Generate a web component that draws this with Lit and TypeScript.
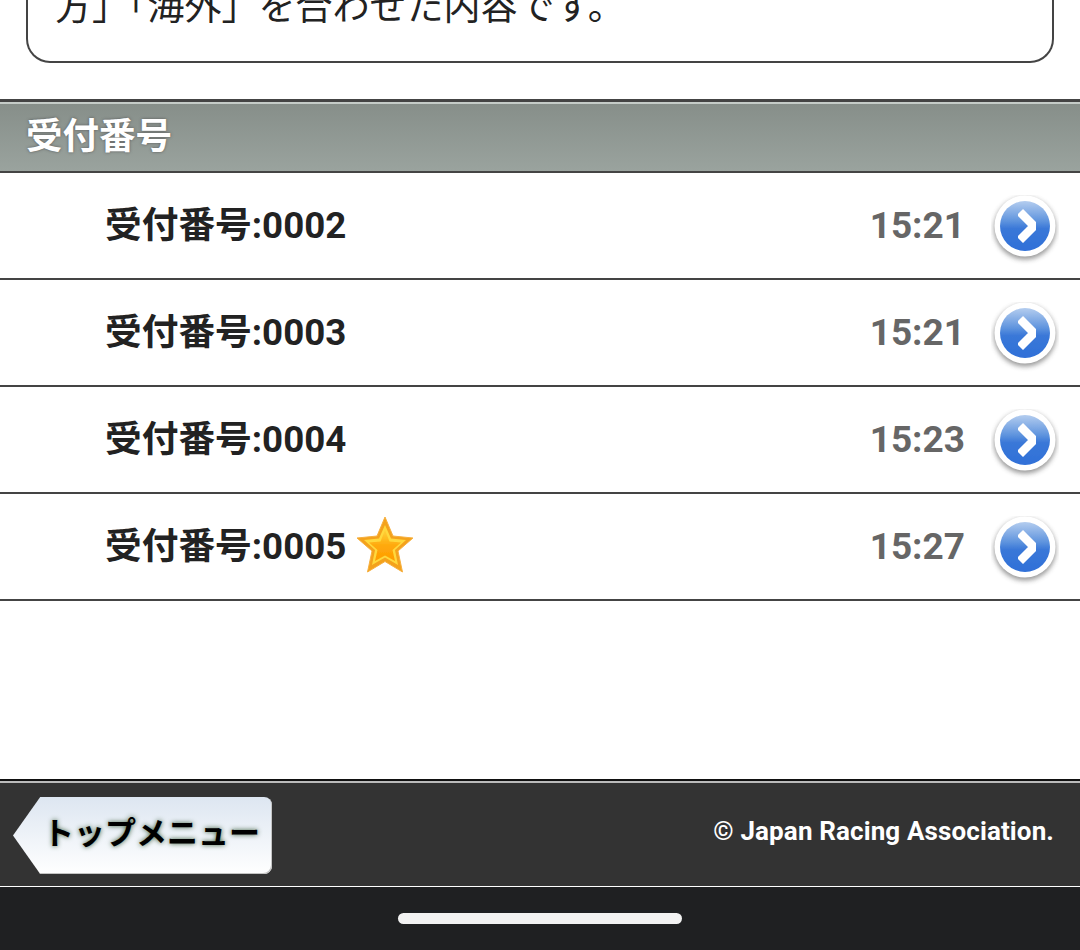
import { LitElement, html, css, svg } from 'lit';
import { customElement } from 'lit/decorators.js';

const rows = [
  { no: '0002', time: '15:21', star: false },
  { no: '0003', time: '15:21', star: false },
  { no: '0004', time: '15:23', star: false },
  { no: '0005', time: '15:27', star: true },
];

const arrowIcon = svg`
  <svg class="arrow" width="68" height="72" viewBox="0 0 68 72">
    <defs>
      <linearGradient id="arrowFill" x1="0" y1="0" x2="0" y2="1">
        <stop offset="0" stop-color="#b4cdef" />
        <stop offset="0.4" stop-color="#5f94de" />
        <stop offset="0.55" stop-color="#3a78d8" />
        <stop offset="1" stop-color="#2f70d8" />
      </linearGradient>
      <filter id="arrowShadow" x="-20%" y="-20%" width="140%" height="140%">
        <feGaussianBlur stdDeviation="2.4" />
      </filter>
      <filter id="arrowSoft" x="-10%" y="-10%" width="120%" height="120%">
        <feGaussianBlur stdDeviation="0.5" />
      </filter>
    </defs>
    <circle cx="34" cy="33.5" r="31" fill="#555" opacity="0.6" filter="url(#arrowShadow)" />
    <circle cx="34" cy="31" r="30.5" fill="#fff" />
    <circle cx="34" cy="31" r="25" fill="url(#arrowFill)" filter="url(#arrowSoft)" />
    <path d="M29 17 L43 31 L29 45" fill="none" stroke="#fff" stroke-width="8.5" filter="url(#arrowSoft)" />
  </svg>
`;

const starIcon = svg`
  <svg class="star" width="60" height="60" viewBox="0 0 60 60">
    <defs>
      <linearGradient id="starFill" x1="0" y1="0" x2="0" y2="1">
        <stop offset="0" stop-color="#ffd23a" />
        <stop offset="0.5" stop-color="#ffa90c" />
        <stop offset="1" stop-color="#ff9c00" />
      </linearGradient>
      <filter id="starSoft" x="-10%" y="-10%" width="120%" height="120%">
        <feGaussianBlur stdDeviation="0.6" />
      </filter>
    </defs>
    <g filter="url(#starSoft)">
      <polygon
        points="30,2 38,21 58,23 43,36 47.5,57 30,46.5 12.5,57 17,36 2,23 22,21"
        fill="#f4a21c"
        stroke="#f6b040"
        stroke-width="1"
        stroke-linejoin="round"
      />
      <polygon
        points="30,10 36,23.5 51,25 40,35 43,50 30,42.5 17,50 20,35 9,25 24,23.5"
        fill="#ffd83c"
      />
      <polygon
        points="30,15 34.5,26.5 46,27.5 37.5,35 40,46 30,40.5 20,46 22.5,35 14,27.5 25.5,26.5"
        fill="url(#starFill)"
      />
    </g>
  </svg>
`;

@customElement('app-root')
export class AppRoot extends LitElement {
  static styles = css`
    :host {
      display: block;
      width: 1080px;
      height: 950px;
      overflow: hidden;
      background: #fff;
      font-family: Roboto, 'Noto Sans CJK JP', sans-serif;
    }
    .page {
      display: flex;
      flex-direction: column;
      height: 950px;
    }
    .notice {
      box-sizing: border-box;
      height: 63px;
      margin: 0 26px 36px;
      border: 2px solid #444;
      border-top: 0;
      border-radius: 0 0 24px 24px;
      overflow: hidden;
    }
    .notice p {
      margin: -15px 0 0 27px;
      font-size: 37px;
      line-height: 46px;
      color: #222;
      white-space: nowrap;
    }
    .heading {
      box-sizing: border-box;
      height: 74px;
      padding: 0 0 6px 26px;
      display: flex;
      align-items: center;
      border-top: 3px solid #444;
      border-bottom: 2px solid #444;
      box-shadow: inset 0 2px 0 #c5ccc8;
      background: linear-gradient(#868e89, #9aa39e);
      color: #fff;
      font-size: 36.5px;
      font-weight: 700;
      text-shadow: 0 0 3px #555;
    }
    .row {
      box-sizing: border-box;
      height: 107px;
      padding: 0 21px 0 105px;
      display: flex;
      align-items: center;
      border-bottom: 2px solid #444;
    }
    .label {
      padding-bottom: 8px;
      font-size: 36.7px;
      font-weight: 700;
      color: #222;
    }
    .star {
      margin: 0 0 4px 9px;
      flex: none;
    }
    .time {
      margin-left: auto;
      font-size: 37px;
      font-weight: 700;
      color: #666;
    }
    .arrow {
      margin: 10px 0 0 26px;
      flex: none;
    }
    .spacer {
      flex: 1;
    }
    .footer {
      box-sizing: border-box;
      height: 108px;
      padding: 0 26px 0 13px;
      display: flex;
      align-items: center;
      justify-content: space-between;
      background: #333;
      border-top: 2px solid #111;
      border-bottom: 1px solid #fff;
      box-shadow: inset 0 2px 0 #bbb;
    }
    .top-btn {
      box-sizing: border-box;
      width: 259px;
      height: 77px;
      margin-top: 4px;
      padding: 0 0 10px 30px;
      display: flex;
      align-items: center;
      border-radius: 0 8px 8px 0;
      clip-path: polygon(10.5% 0, 100% 0, 100% 100%, 10.5% 100%, 0 50%);
      background: linear-gradient(#dde6f1, #fff);
      box-shadow: inset -1px -1px 0 #c4c4c4;
      color: #000;
      font-size: 31px;
      font-weight: 700;
      white-space: nowrap;
      text-shadow: 0 0 5px #3f5f3f;
    }
    .copy {
      padding-bottom: 6px;
      color: #fff;
      font-size: 26px;
      letter-spacing: 0.12px;
      font-weight: 700;
    }
    .nav {
      flex: none;
      height: 63px;
      background: #1f2022;
      display: flex;
      align-items: center;
      justify-content: center;
    }
    .pill {
      width: 284px;
      height: 11px;
      border-radius: 6px;
      background: #f2f2f2;
    }
  `;

  render() {
    return html`
      <div class="page">
        <div class="notice"><p>方」「海外」を合わせた内容です。</p></div>
        <div class="heading">受付番号</div>
        ${rows.map(
          r => html`
            <div class="row">
              <span class="label">受付番号:${r.no}</span>
              ${r.star ? starIcon : ''}
              <span class="time">${r.time}</span>
              ${arrowIcon}
            </div>
          `
        )}
        <div class="spacer"></div>
        <div class="footer">
          <div class="top-btn">トップメニュー</div>
          <div class="copy">© Japan Racing Association.</div>
        </div>
        <div class="nav"><div class="pill"></div></div>
      </div>
    `;
  }
}
